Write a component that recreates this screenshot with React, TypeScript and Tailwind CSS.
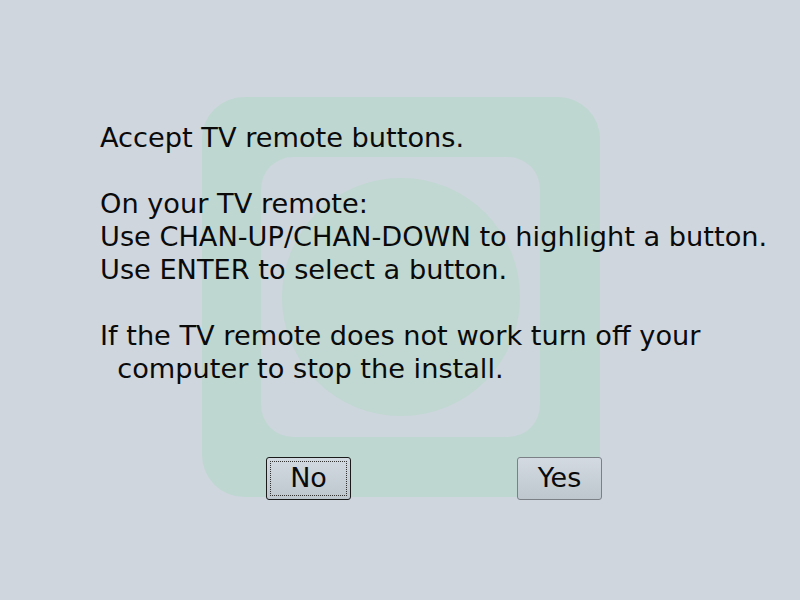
export default function App() {
  const lines = [
    "Accept TV remote buttons.",
    "",
    "On your TV remote:",
    "Use CHAN-UP/CHAN-DOWN to highlight a button.",
    "Use ENTER to select a button.",
    "",
    "If the TV remote does not work turn off your",
    "  computer to stop the install.",
  ];

  return (
    <div className="relative h-[600px] w-[800px] overflow-hidden bg-[#cfd6de] font-['DejaVu_Sans',sans-serif] text-[#0a0a0a]">
      {/* faded logo behind the dialog text */}
      <svg className="absolute left-0 top-0" width="800" height="600" viewBox="0 0 800 600">
        <rect x="202" y="97" width="398" height="400" rx="42" fill="#bfd7d1" />
        <rect x="261" y="157" width="279" height="280" rx="32" fill="#ccd6dc" />
        <circle cx="401" cy="297" r="119" fill="#c0d8d1" />
      </svg>

      <div className="relative flex flex-col pl-[100px] pt-[121px]">
        {lines.map((l, i) => (
          <div key={i} className="h-[33px] whitespace-pre text-[27.2px] leading-[33px]">
            {l}
          </div>
        ))}
      </div>

      <div className="absolute left-0 top-[457px] flex w-full">
        <button className="ml-[266px] h-[43px] w-[85px] rounded-[3px] border border-[#1a1a1a] bg-gradient-to-b from-[#d3dae2] to-[#bec6ce] p-[3px] text-[27px]">
          <span className="flex h-full w-full items-center justify-center border border-dotted border-[#333]">No</span>
        </button>
        <button className="ml-[166px] h-[43px] w-[85px] rounded-[3px] border border-[#7b8087] bg-gradient-to-b from-[#d3dae2] to-[#bec6ce] text-[27px]">
          Yes
        </button>
      </div>
    </div>
  );
}
